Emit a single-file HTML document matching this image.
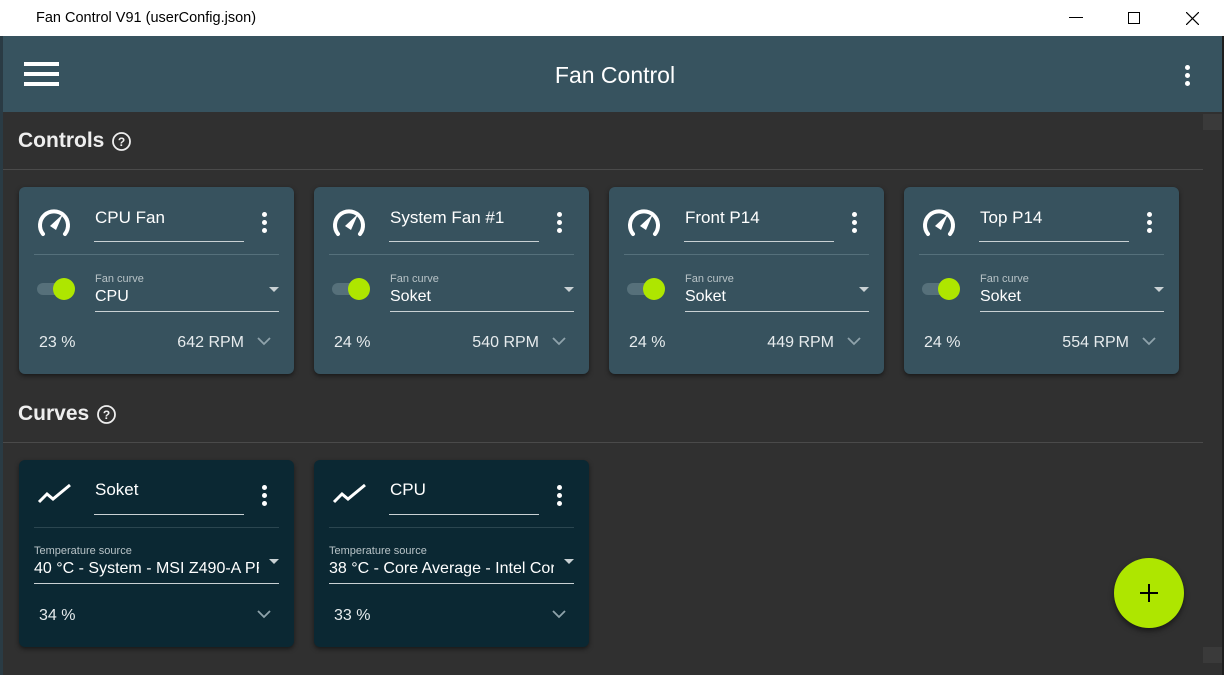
<!DOCTYPE html>
<html><head><style>
*{margin:0;padding:0;box-sizing:border-box}
body{width:1224px;height:675px;background:#303030;font-family:"Liberation Sans",Arial,sans-serif;position:relative;overflow:hidden;color:#fff}
.abs{position:absolute}
.title{left:0;top:0;width:1224px;height:36px;background:#fff;color:#000;font-size:14px}
.appbar{left:3px;top:36px;width:1219px;height:76px;background:#37535f}
.card{position:absolute;width:275px;height:187px;border-radius:6px;background:#37525e;box-shadow:0 2px 5px rgba(0,0,0,.5)}
.curve{background:#0b2833}
.name{position:absolute;left:76px;top:21px;font-size:17px}
.nl{position:absolute;left:75px;top:54px;width:150px;height:1px;background:#c9d1d4}
.sep{position:absolute;left:15px;top:67px;width:245px;height:1px;background:#55707b}
.curve .sep{background:#2b4650}
.dots{position:absolute;left:243px;top:25px;width:5px}
.dots i{display:block;width:5px;height:5px;border-radius:50%;background:#fff;margin-bottom:3px}
.lab{position:absolute;font-size:11px;color:#b8c3c7}
.val{position:absolute;font-size:16px}
.ul{position:absolute;height:1px;background:#c9d1d4}
.arr{position:absolute;left:250px;width:0;height:0;border-left:5px solid transparent;border-right:5px solid transparent;border-top:5px solid #c9d1d4}
.pct{position:absolute;left:20px;top:147px;font-size:16px;color:#e6ebed}
.rpm{position:absolute;right:50px;top:147px;font-size:16px;color:#e6ebed}
.chev{position:absolute;left:238px;top:150px}
.hdr{font-size:21px;font-weight:bold;color:#eee}
.hl{height:1px;background:#4a4a4a;left:3px;width:1200px}
</style></head><body>
<div class="abs title"><span class="abs" style="left:36px;top:10px;font-size:14.5px">Fan Control V91 (userConfig.json)</span>
<span class="abs" style="left:1069px;top:17px;width:14px;height:1px;background:#000"></span>
<span class="abs" style="left:1128px;top:12px;width:12px;height:12px;border:1px solid #000"></span>
<svg class="abs" style="left:1186px;top:12px" width="13" height="13"><path d="M0 0L13 13M13 0L0 13" stroke="#000" stroke-width="1.2"/></svg>
</div>
<div class="abs" style="left:0;top:36px;width:3px;height:639px;background:#2a3b44"></div>
<div class="abs" style="left:1222px;top:36px;width:2px;height:639px;background:#1e1e1e"></div>
<div class="abs appbar">
<div class="abs" style="left:21px;top:26px;width:35px;height:4px;background:#fff;box-shadow:0 10px 0 #fff,0 20px 0 #fff"></div>
<div class="abs" style="left:0;width:1224px;top:26px;text-align:center;font-size:23px">Fan Control</div>
<div class="abs" style="left:1182px;top:29px"><div class="dots" style="position:static"><i></i><i></i><i></i></div></div>
</div>
<div class="abs hdr" style="left:18px;top:129px">Controls</div>
<svg class="abs" style="left:111px;top:131px" width="21" height="21"><circle cx="10.5" cy="10.5" r="8.5" fill="none" stroke="#eee" stroke-width="1.8"/><text x="10.5" y="15" font-size="12" font-weight="bold" fill="#eee" text-anchor="middle" font-family="Liberation Sans">?</text></svg>
<div class="abs hl" style="top:169px"></div>
<div class="abs hdr" style="left:18px;top:402px">Curves</div>
<svg class="abs" style="left:96px;top:404px" width="21" height="21"><circle cx="10.5" cy="10.5" r="8.5" fill="none" stroke="#eee" stroke-width="1.8"/><text x="10.5" y="15" font-size="12" font-weight="bold" fill="#eee" text-anchor="middle" font-family="Liberation Sans">?</text></svg>
<div class="abs hl" style="top:442px"></div>

<div class="card" style="left:19px;top:187px">
<svg class="abs" style="left:17px;top:18px" width="36" height="32"><path d="M7 29A14 14 0 1 1 29 29" fill="none" stroke="#fff" stroke-width="4" stroke-linecap="round"/><path d="M14 21L27 9L20 25Z" fill="#fff"/></svg>
<div class="name">CPU Fan</div><div class="nl"></div><div class="dots"><i></i><i></i><i></i></div><div class="sep"></div>
<div class="abs" style="left:18px;top:96px;width:34px;height:12px;border-radius:6px;background:#56707a"></div><div class="abs" style="left:34px;top:91px;width:22px;height:22px;border-radius:50%;background:#aee600"></div>
<div class="lab" style="left:76px;top:86px">Fan curve</div><div class="val" style="left:76px;top:101px">CPU</div><div class="arr" style="top:100px"></div><div class="ul" style="left:76px;top:124px;width:184px"></div>
<div class="pct">23 %</div><div class="rpm">642 RPM</div>
<svg class="chev" width="14" height="9"><path d="M1 1L7 7L13 1" fill="none" stroke="#8fa3ab" stroke-width="1.8"/></svg>
</div>
<div class="card" style="left:314px;top:187px">
<svg class="abs" style="left:17px;top:18px" width="36" height="32"><path d="M7 29A14 14 0 1 1 29 29" fill="none" stroke="#fff" stroke-width="4" stroke-linecap="round"/><path d="M14 21L27 9L20 25Z" fill="#fff"/></svg>
<div class="name">System Fan #1</div><div class="nl"></div><div class="dots"><i></i><i></i><i></i></div><div class="sep"></div>
<div class="abs" style="left:18px;top:96px;width:34px;height:12px;border-radius:6px;background:#56707a"></div><div class="abs" style="left:34px;top:91px;width:22px;height:22px;border-radius:50%;background:#aee600"></div>
<div class="lab" style="left:76px;top:86px">Fan curve</div><div class="val" style="left:76px;top:101px">Soket</div><div class="arr" style="top:100px"></div><div class="ul" style="left:76px;top:124px;width:184px"></div>
<div class="pct">24 %</div><div class="rpm">540 RPM</div>
<svg class="chev" width="14" height="9"><path d="M1 1L7 7L13 1" fill="none" stroke="#8fa3ab" stroke-width="1.8"/></svg>
</div>
<div class="card" style="left:609px;top:187px">
<svg class="abs" style="left:17px;top:18px" width="36" height="32"><path d="M7 29A14 14 0 1 1 29 29" fill="none" stroke="#fff" stroke-width="4" stroke-linecap="round"/><path d="M14 21L27 9L20 25Z" fill="#fff"/></svg>
<div class="name">Front P14</div><div class="nl"></div><div class="dots"><i></i><i></i><i></i></div><div class="sep"></div>
<div class="abs" style="left:18px;top:96px;width:34px;height:12px;border-radius:6px;background:#56707a"></div><div class="abs" style="left:34px;top:91px;width:22px;height:22px;border-radius:50%;background:#aee600"></div>
<div class="lab" style="left:76px;top:86px">Fan curve</div><div class="val" style="left:76px;top:101px">Soket</div><div class="arr" style="top:100px"></div><div class="ul" style="left:76px;top:124px;width:184px"></div>
<div class="pct">24 %</div><div class="rpm">449 RPM</div>
<svg class="chev" width="14" height="9"><path d="M1 1L7 7L13 1" fill="none" stroke="#8fa3ab" stroke-width="1.8"/></svg>
</div>
<div class="card" style="left:904px;top:187px">
<svg class="abs" style="left:17px;top:18px" width="36" height="32"><path d="M7 29A14 14 0 1 1 29 29" fill="none" stroke="#fff" stroke-width="4" stroke-linecap="round"/><path d="M14 21L27 9L20 25Z" fill="#fff"/></svg>
<div class="name">Top P14</div><div class="nl"></div><div class="dots"><i></i><i></i><i></i></div><div class="sep"></div>
<div class="abs" style="left:18px;top:96px;width:34px;height:12px;border-radius:6px;background:#56707a"></div><div class="abs" style="left:34px;top:91px;width:22px;height:22px;border-radius:50%;background:#aee600"></div>
<div class="lab" style="left:76px;top:86px">Fan curve</div><div class="val" style="left:76px;top:101px">Soket</div><div class="arr" style="top:100px"></div><div class="ul" style="left:76px;top:124px;width:184px"></div>
<div class="pct">24 %</div><div class="rpm">554 RPM</div>
<svg class="chev" width="14" height="9"><path d="M1 1L7 7L13 1" fill="none" stroke="#8fa3ab" stroke-width="1.8"/></svg>
</div>

<div class="card curve" style="left:19px;top:460px">
<svg class="abs" style="left:18px;top:22px" width="36" height="24"><path d="M2 20L10 12L16 17L33 3" fill="none" stroke="#fff" stroke-width="3"/></svg>
<div class="name" style="top:20px">Soket</div><div class="nl"></div><div class="dots"><i></i><i></i><i></i></div><div class="sep"></div>
<div class="lab" style="left:15px;top:85px">Temperature source</div><div class="val" style="left:15px;top:100px;width:225px;overflow:hidden;white-space:nowrap">40 °C - System - MSI Z490-A PRO</div><div class="arr" style="top:99px"></div><div class="ul" style="left:15px;top:123px;width:245px"></div>
<div class="pct">34 %</div>
<svg class="chev" width="14" height="9"><path d="M1 1L7 7L13 1" fill="none" stroke="#8fa3ab" stroke-width="1.8"/></svg>
</div>
<div class="card curve" style="left:314px;top:460px">
<svg class="abs" style="left:18px;top:22px" width="36" height="24"><path d="M2 20L10 12L16 17L33 3" fill="none" stroke="#fff" stroke-width="3"/></svg>
<div class="name" style="top:20px">CPU</div><div class="nl"></div><div class="dots"><i></i><i></i><i></i></div><div class="sep"></div>
<div class="lab" style="left:15px;top:85px">Temperature source</div><div class="val" style="left:15px;top:100px;width:225px;overflow:hidden;white-space:nowrap">38 °C - Core Average - Intel Core i5</div><div class="arr" style="top:99px"></div><div class="ul" style="left:15px;top:123px;width:245px"></div>
<div class="pct">33 %</div>
<svg class="chev" width="14" height="9"><path d="M1 1L7 7L13 1" fill="none" stroke="#8fa3ab" stroke-width="1.8"/></svg>
</div>

<div class="abs" style="left:1114px;top:558px;width:70px;height:70px;border-radius:50%;background:#aee600;box-shadow:0 3px 6px rgba(0,0,0,.5)"></div>
<svg class="abs" style="left:1139px;top:583px" width="20" height="20"><path d="M10 1V19M1 10H19" stroke="#000" stroke-width="2"/></svg>
<div class="abs" style="left:1203px;top:114px;width:19px;height:16px;background:#3a3a3a"></div>
<div class="abs" style="left:1203px;top:647px;width:19px;height:16px;background:#3a3a3a"></div>
</body></html>
